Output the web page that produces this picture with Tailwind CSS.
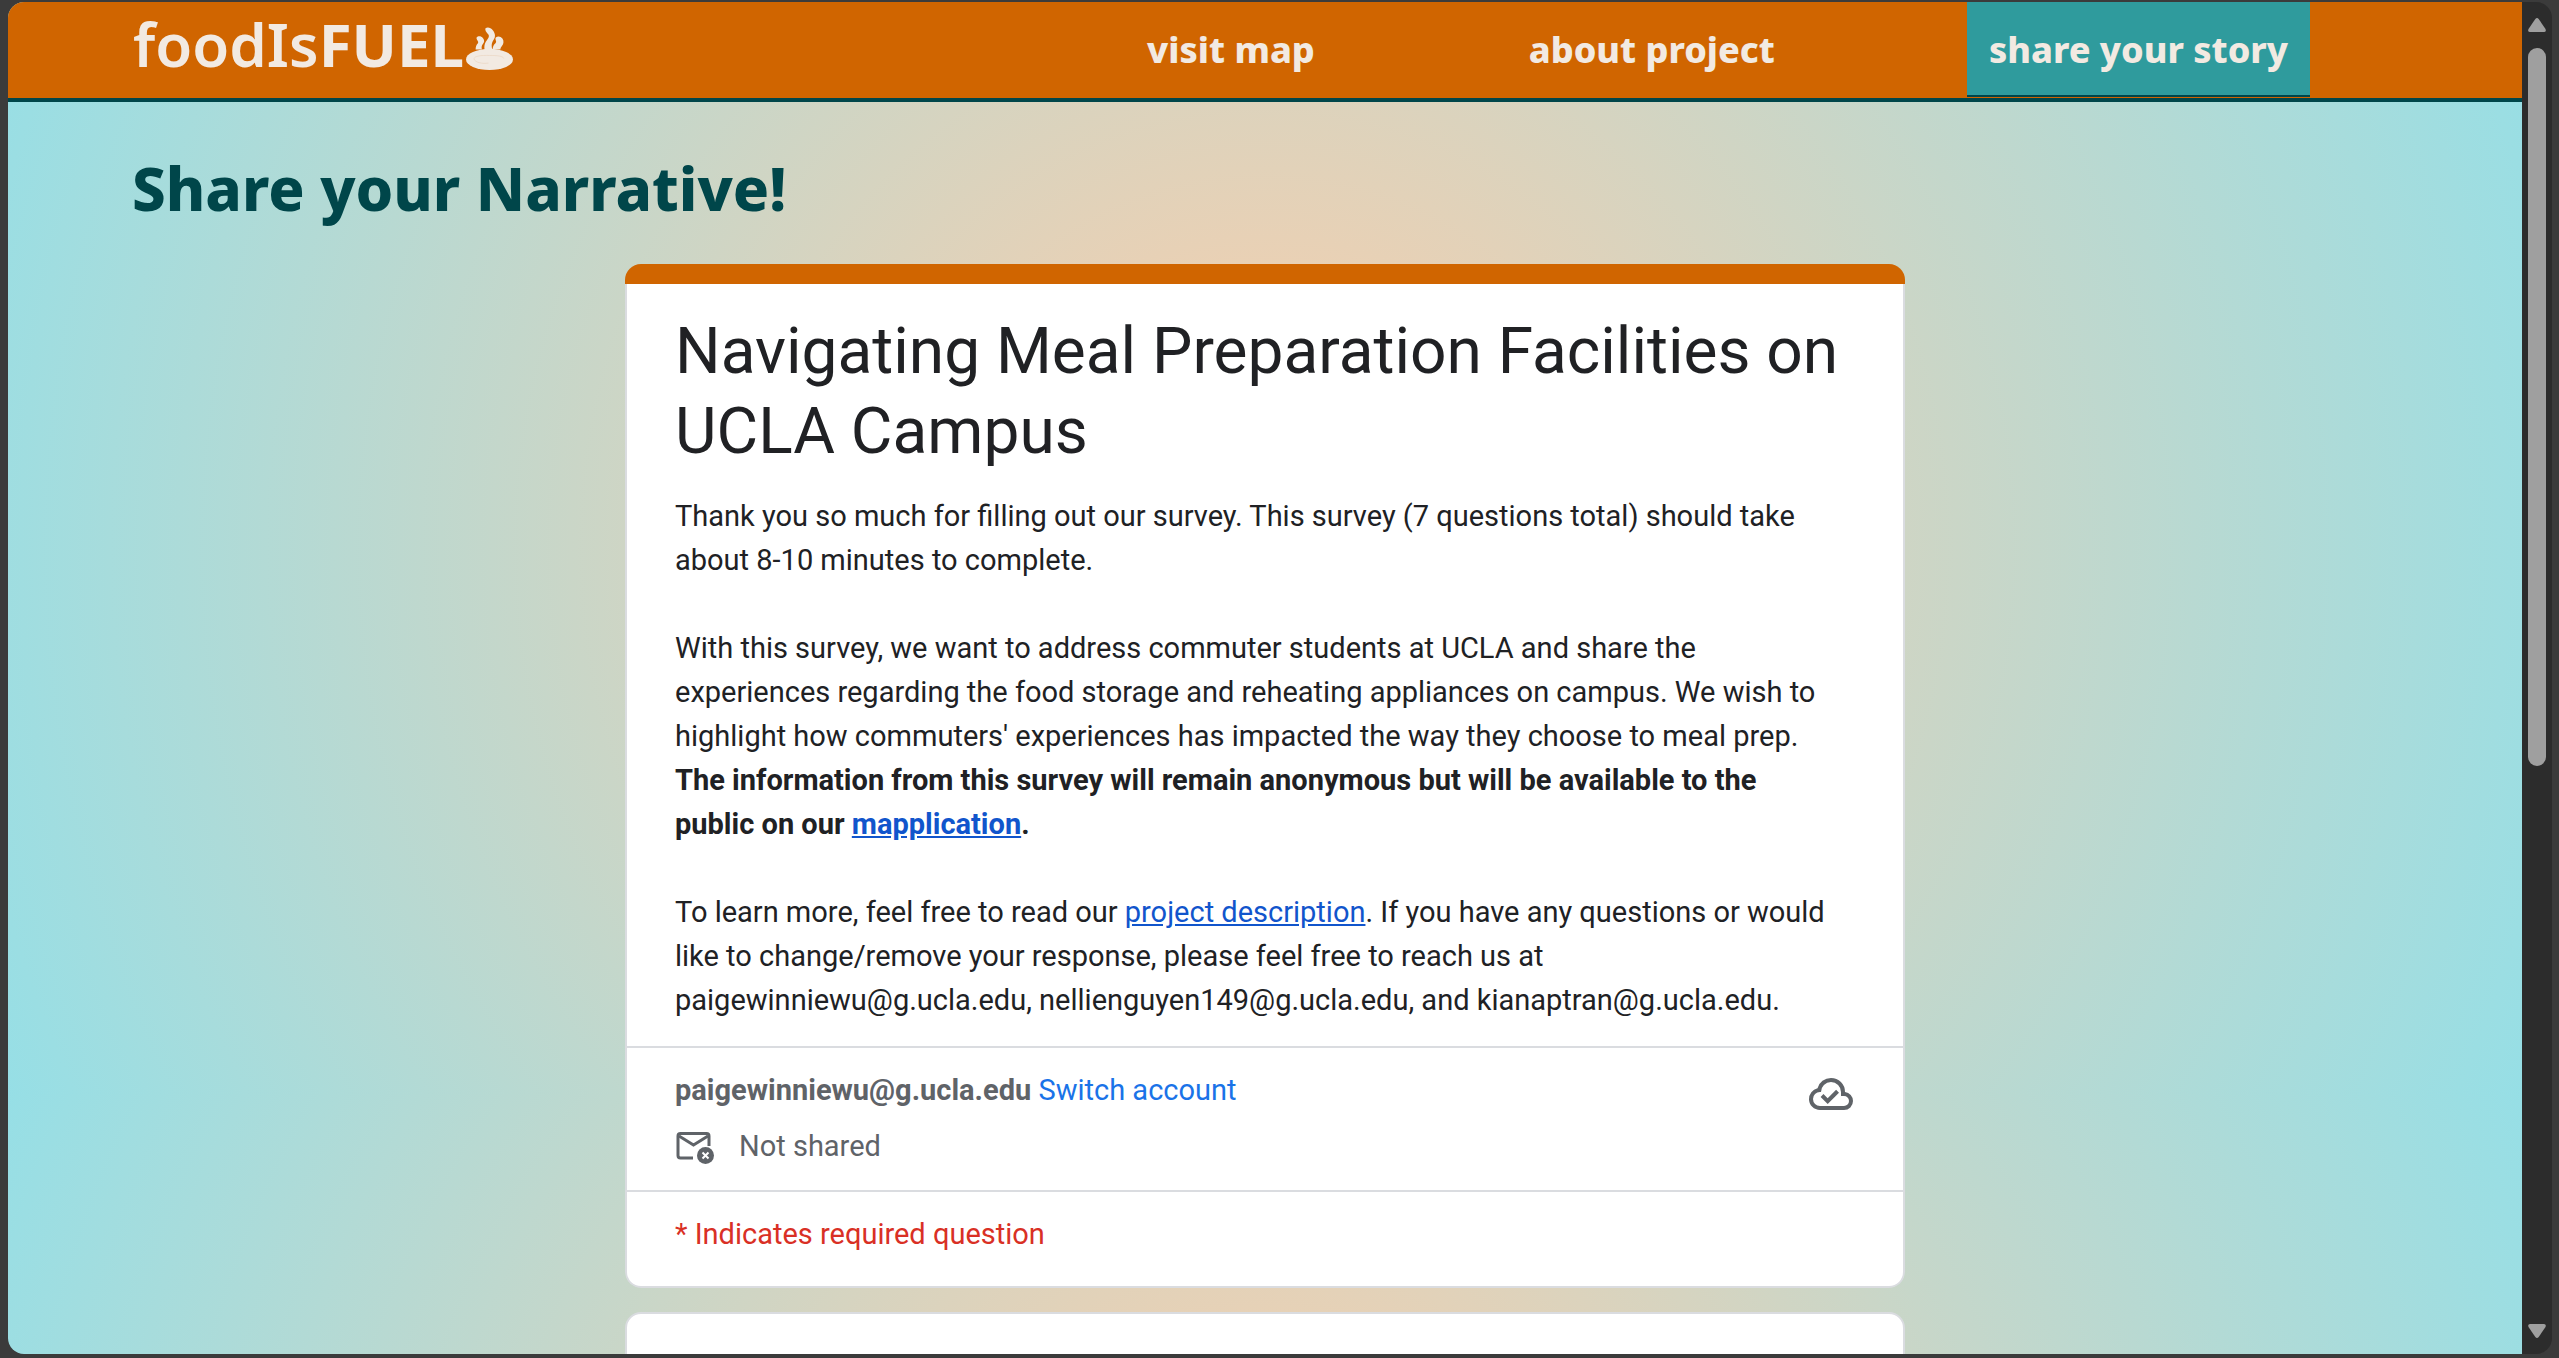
<!DOCTYPE html>
<html lang="en">
<head>
<meta charset="utf-8">
<title>foodIsFUEL - Share your story</title>
<script src="https://cdn.jsdelivr.net/npm/@tailwindcss/browser@4"></script>
</head>
<body class="h-screen overflow-hidden bg-[#3b3b3b] pt-[2px] pr-[7px] pb-1 pl-2">
<div class="flex h-full overflow-hidden rounded-[16px] bg-[#2c2c2c] font-['Noto_Sans',sans-serif]">
  <div class="flex min-w-0 flex-1 flex-col overflow-hidden bg-[radial-gradient(circle,#ffcda8,#8fe0ea_107%)] bg-size-[100%_1091px]">
    <header class="flex h-[100px] shrink-0 items-start border-b-4 border-[#00464a] bg-[#d06500] pr-[212px] pl-[125px] text-[#f2eae2]">
      <a href="#" class="flex items-start gap-0.5 text-[60px] leading-[84px]"><span><span class="font-semibold">foodIs</span><span class="font-bold">FUEL</span></span>
        <svg class="mt-[25px] h-[43px] w-[47px]" viewBox="80 80 142 130" fill="currentColor" aria-hidden="true">
          <path d="M139 84C145 79 155 82 161 90C168 99 170 108 164 118C158 127 156 133 159 148H136C134 136 137 128 143 120C149 112 151 106 147 102C145 98 136 92 139 84Z"/>
          <path d="M112 112C116 106 126 107 131 113C136 119 136 125 132 130C128 135 126 140 128 148H109C109 140 111 134 116 129C120 124 110 119 112 112Z"/>
          <path d="M170 112C176 106 185 108 190 115C195 122 194 131 189 137C185 142 184 145 184 148H160C161 140 163 134 169 129C175 124 166 119 170 112Z"/>
          <ellipse cx="151" cy="178" rx="71" ry="32"/>
          <path d="M104 176C106 168 125 165 151 166C175 166 192 168 194 175M104 177C108 187 128 192 148 189" fill="none" stroke="#e6cdb4" stroke-width="1.500"/>
        </svg>
      </a>
      <nav class="ml-auto flex h-[95px] items-stretch gap-[170px] text-[36px] leading-[96px] font-extrabold">
        <a href="#" class="px-[22px]">visit map</a>
        <a href="#" class="px-[22px]">about project</a>
        <a href="#" class="border-b-2 border-[#00464a] bg-[#2f9b9d] px-[22px]">share your story</a>
      </nav>
    </header>
    <main class="pt-[42px]">
      <h1 class="pl-[124px] text-[60px] leading-[88px] font-extrabold text-[#00464a]">Share your Narrative!</h1>
      <div class="mx-auto mt-8 flex w-[1280px] flex-col gap-6 font-[Roboto,sans-serif] text-[#202124]">
        <section class="overflow-hidden rounded-[16px]">
          <div class="h-5 bg-[#d06500]"></div>
          <div class="rounded-b-[16px] border-2 border-t-0 border-[#dadce0] bg-white">
            <div class="px-12 pt-7 pb-6 text-[29px] leading-[44px]">
              <h2 class="text-[64px] leading-[80px]">Navigating Meal Preparation Facilities on UCLA Campus</h2>
              <p class="mt-[22px]">Thank you so much for filling out our survey. This survey (7 questions total) should take<br>about 8-10 minutes to complete.</p>
              <p class="mt-11">With this survey, we want to address commuter students at UCLA and share the<br>experiences regarding the food storage and reheating appliances on campus. We wish to<br>highlight how commuters' experiences has impacted the way they choose to meal prep.<br><b>The information from this survey will remain anonymous but will be available to the<br>public on our <a href="#" class="text-[#1155cc] underline">mapplication</a>.</b></p>
              <p class="mt-11">To learn more, feel free to read our <a href="#" class="text-[#1155cc] underline">project description</a>. If you have any questions or would<br>like to change/remove your response, please feel free to reach us at<br>paigewinniewu@g.ucla.edu, nellienguyen149@g.ucla.edu, and kianaptran@g.ucla.edu.</p>
            </div>
            <div class="flex items-start justify-between border-y-2 border-[#dadce0] px-12 pt-[22px] pb-6 text-[29px] leading-[40px] text-[#5f6368]">
              <div class="flex flex-col gap-4">
                <p><b>paigewinniewu@g.ucla.edu</b> <a href="#" class="text-[#1a73e8]">Switch account</a></p>
                <p class="flex items-center gap-6">
                  <svg class="h-10 w-10" viewBox="0 0 40 40" fill="none" stroke="currentColor" stroke-width="3" aria-hidden="true">
                    <path d="M34 20V10Q34 7.500 31.500 7.500H5.500Q3 7.500 3 10V29.500Q3 32 5.500 32H18"/>
                    <path d="M4 10L18.500 19L33 10"/>
                    <circle cx="30.500" cy="29.500" r="8.500" fill="currentColor" stroke="none"/>
                    <path d="M27.500 26.500L33.500 32.500M33.500 26.500L27.500 32.500" stroke="#fff" stroke-width="2"/>
                  </svg>
                  Not shared
                </p>
              </div>
              <svg class="h-12 w-12" viewBox="0 -960 960 960" fill="currentColor" aria-hidden="true"><path d="M414-280l226-226-58-58-169 169-84-84-57 57 142 142ZM260-160q-91 0-155.5-63T40-377q0-78 47-139t123-78q25-92 100-149t170-57q117 0 198.5 81.5T760-520q69 8 114.5 59.5T920-340q0 75-52.5 127.5T740-160H260Zm0-80h480q42 0 71-29t29-71q0-42-29-71t-71-29h-60v-80q0-83-58.5-141.5T480-720q-83 0-141.5 58.5T280-520h-20q-58 0-99 41t-41 99q0 58 41 99t99 41Z"/></svg>
            </div>
            <p class="px-12 pt-5 pb-[30px] text-[29px] leading-[44px] text-[#d93025]">* Indicates required question</p>
          </div>
        </section>
        <section class="h-40 rounded-[16px] border-2 border-[#dadce0] bg-white"></section>
      </div>
    </main>
  </div>
  <div class="flex w-[30px] shrink-0 flex-col px-[6px] py-4 text-[#9f9f9f]" aria-hidden="true">
    <svg class="h-[14px] w-[18px]" viewBox="0 0 18 14" fill="currentColor"><path d="M7.300 1Q9-1 10.700 1L17.500 11Q18.500 14 16 14H2Q-.5 14 .5 11Z"/></svg>
    <div class="my-4 flex-1"><div class="h-[57%] rounded-full bg-[#9f9f9f]"></div></div>
    <svg class="h-[14px] w-[18px]" viewBox="0 0 18 14" fill="currentColor"><path d="M7.300 13Q9 15 10.700 13L17.500 3Q18.500 0 16 0H2Q-.5 0 .5 3Z"/></svg>
  </div>
</div>
</body>
</html>
